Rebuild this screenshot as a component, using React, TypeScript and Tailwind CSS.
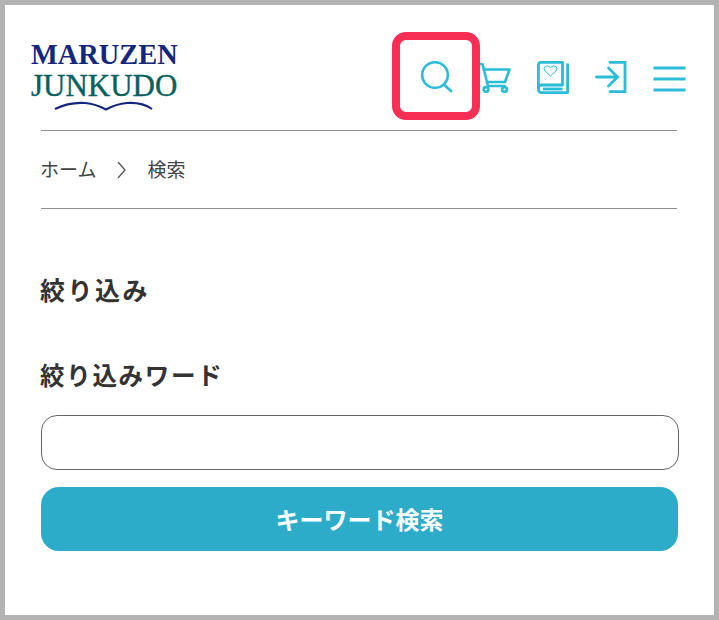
import React from 'react';

const jp = '[font-family:"Noto_Sans_CJK_JP","Noto_Sans",sans-serif]';

function SearchIcon() {
  return (
    <svg width="34" height="34" viewBox="0 0 34 34" fill="none" stroke="#2bbcd8" strokeWidth="2.6" strokeLinecap="round">
      <circle cx="15" cy="14" r="12.8" />
      <path d="M25 24.5 L31 30" />
    </svg>
  );
}

function CartIcon() {
  return (
    <svg width="32" height="30" viewBox="0 0 32 30" fill="none" stroke="#2bbcd8" strokeWidth="2.6" strokeLinecap="round" strokeLinejoin="round">
      <path d="M1 1 L3.5 1 L9 23 L25.5 23" />
      <path d="M4.8 6.5 L30.5 6.5 L26 19 L8 19" />
      <circle cx="7" cy="26.5" r="2.4" />
      <circle cx="25.5" cy="26.5" r="2.4" />
    </svg>
  );
}

function BookIcon() {
  return (
    <svg width="32" height="33" viewBox="0 0 32 33" fill="none" stroke="#2bbcd8" strokeWidth="2.8" strokeLinejoin="round">
      <path d="M1.4 27 L1.4 4 Q1.4 1.4 4 1.4 L25.5 1.4 L25.5 24 L5 24 Q1.4 24 1.4 27.5 Q1.4 31.6 5 31.6 L30.6 31.6 L30.6 2.5" />
      <path d="M6 28 L25.5 28" strokeWidth="2.8" />
      <path
        d="M13.5 15 L8 10 Q6 7.5 8 5.5 Q11 3.7 13.5 6.5 Q16 3.7 19 5.5 Q21 7.5 19 10 Z"
        strokeWidth="1"
      />
    </svg>
  );
}

function LoginIcon() {
  return (
    <svg width="32" height="32" viewBox="0 0 32 32" fill="none" stroke="#2bbcd8" strokeWidth="2.8" strokeLinecap="round" strokeLinejoin="miter">
      <path d="M15 1.4 L30 1.4 L30 30.6 L15 30.6" />
      <path d="M1.5 16 L22 16" />
      <path d="M13.5 7 L22.5 16 L13.5 25" />
    </svg>
  );
}

function MenuIcon() {
  return (
    <svg width="33" height="26" viewBox="0 0 33 26" fill="none" stroke="#2bbcd8" strokeWidth="2.8">
      <path d="M0.5 2 L32.5 2" />
      <path d="M0.5 13 L32.5 13" />
      <path d="M0.5 24 L32.5 24" />
    </svg>
  );
}

export default function App() {
  return (
    <div className={`w-[719px] h-[620px] border-[5px] border-[#b3b3b3] bg-white text-[#333333] ${jp}`}>
      {/* --- Header --- */}
      <header className="flex items-start justify-between h-[125px] pl-[26px] pr-[28px]">
        <div className="pt-[35px] w-[148px] [font-family:'Liberation_Serif',serif]">
          <div className="text-[28.4px] leading-[30px] font-bold text-[#14267e] whitespace-nowrap">MARUZEN</div>
          <div className="text-[31px] leading-[31px] text-[#07625f] whitespace-nowrap [-webkit-text-stroke:0.4px_#07625f]">JUNKUDO</div>
          <svg width="99" height="10" viewBox="0 0 99 10" fill="none" stroke="#14267e" strokeWidth="2" className="ml-[23px]">
            <path d="M1 8 Q15 1 31 2 Q42 3 52 8.5 Q62 3 73 2 Q88 1 98 8" />
          </svg>
        </div>
        <div className="flex items-start pt-[56px]">
          <div className="relative mr-[25px] ml-[2px]">
            <SearchIcon />
            <div className="absolute -left-[28px] -top-[29px] w-[88px] h-[88px] rounded-[14px] border-[8px] border-[#f72f55]" />
          </div>
          <div className="mt-[2px] mr-[26px]"><CartIcon /></div>
          <div className="mr-[26px]"><BookIcon /></div>
          <div className="mr-[26px]"><LoginIcon /></div>
          <div className="mt-[5px]"><MenuIcon /></div>
        </div>
      </header>

      <div className="pl-[36px] pr-[37px]">
        {/* --- Breadcrumb --- */}
        <nav className="flex items-center h-[79px] border-y border-[#8f8f8f] text-[19px] text-[#444444]">
          <span className="-ml-[1px]">ホーム</span>
          <span className="ml-[21px] mr-[21px]">
            <svg width="9" height="18" viewBox="0 0 9 18" fill="none" stroke="#555555" strokeWidth="1.3">
              <path d="M1 1 L8 9 L1 17" />
            </svg>
          </span>
          <span>検索</span>
        </nav>

        {/* --- Filter --- */}
        <h2 className="mt-[60px] -ml-[1px] text-[25px] leading-[40px] font-bold tracking-[2.5px]">絞り込み</h2>
        <h3 className="mt-[46px] -ml-[1px] text-[24.5px] leading-[40px] font-bold tracking-[1.7px]">絞り込みワード</h3>
        <input
          type="text"
          className="block mt-[20px] w-[638px] h-[55px] rounded-[16px] border border-[#666666] bg-white"
        />
        <button className="block mt-[17px] w-[637px] h-[64px] rounded-[18px] bg-[#2cacc8] text-white text-[24px] font-bold">
          キーワード検索
        </button>
      </div>
    </div>
  );
}
